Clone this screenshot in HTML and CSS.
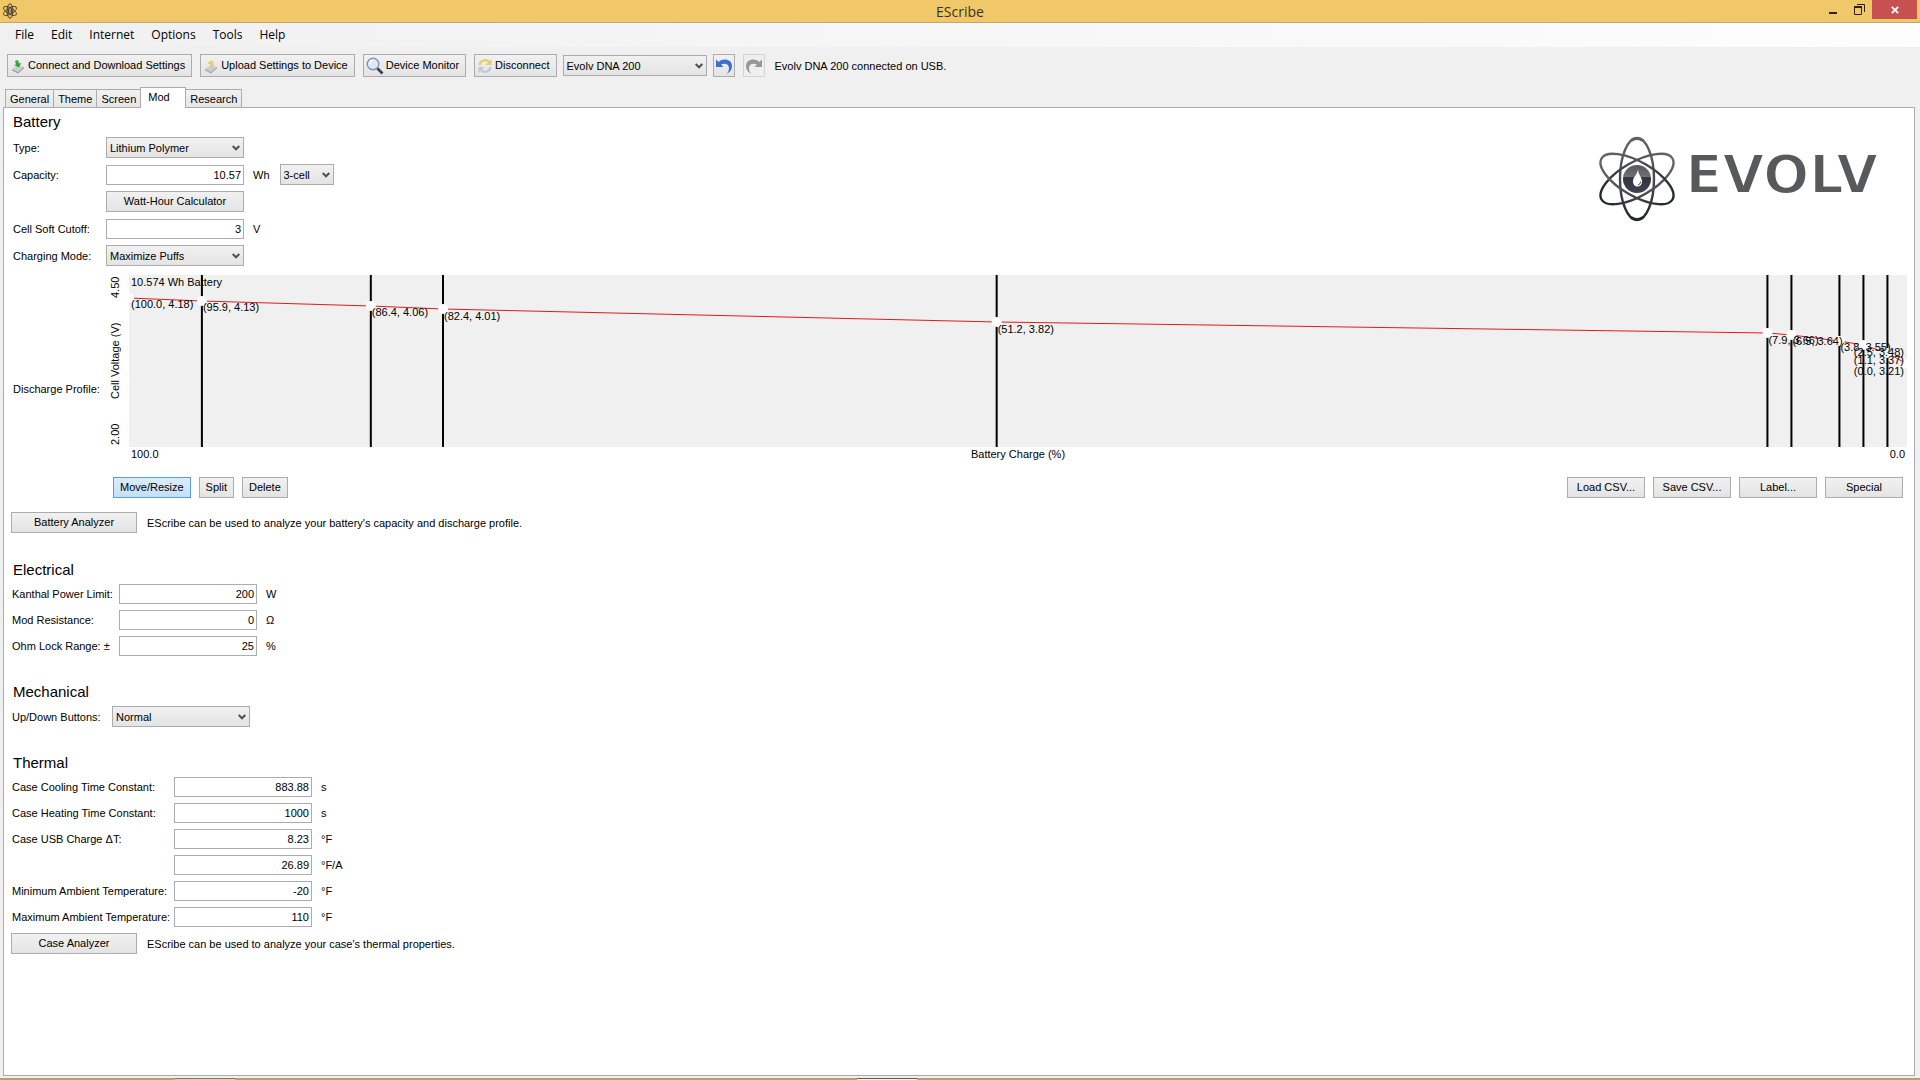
FILE: index.html
```html
<!DOCTYPE html>
<html lang="en">
<head>
<meta charset="utf-8">
<title>EScribe</title>
<link rel="stylesheet" href="styles.css">
</head>
<body>
<svg width="0" height="0" class="defs" aria-hidden="true">
  <defs>
    <symbol id="chevron" viewBox="0 0 8 6"><path d="M.7 1 4 4.3 7.3 1" fill="none" stroke="#505050" stroke-width="2"/></symbol>
    <linearGradient id="atomInk" gradientUnits="userSpaceOnUse" x1="0" y1="0" x2="0" y2="86"><stop offset="0" stop-color="#666"/><stop offset=".5" stop-color="#4a4b4f"/><stop offset="1" stop-color="#22242e"/></linearGradient>
    <linearGradient id="coreInk" x1="0" y1="0" x2="0" y2="1"><stop offset="0" stop-color="#55575d"/><stop offset=".42" stop-color="#6d7075"/><stop offset=".45" stop-color="#30343d"/><stop offset="1" stop-color="#3f434d"/></linearGradient>
  </defs>
</svg>

<header class="titlebar">
  <svg class="app-icon" width="16" height="16" viewBox="0 0 16 16"><g fill="none" stroke="#4a3f25"><ellipse cx="8" cy="8" rx="3" ry="7.2"/><ellipse cx="8" cy="8" rx="3" ry="7.2" transform="rotate(60 8 8)"/><ellipse cx="8" cy="8" rx="3" ry="7.2" transform="rotate(-60 8 8)"/></g><circle cx="8" cy="8" r="2.6" fill="#4b4a4c"/><path d="M8 6v4" stroke="#ddd"/></svg>
  <h1 class="app-title">EScribe</h1>
  <div class="window-buttons">
    <button class="win-btn" aria-label="Minimize"><svg width="10" height="14" viewBox="0 0 10 14"><path d="M1 9h8v2H1z" fill="#2b2310"/></svg></button>
    <button class="win-btn" aria-label="Restore"><svg width="11" height="11" viewBox="0 0 11 11"><path d="M3 .5h7.5V8" fill="none" stroke="#2b2310"/><path d="M.5 3v7.5h7V3z" fill="none" stroke="#2b2310"/><path d="M0 2h8v2H0z" fill="#2b2310"/></svg></button>
    <button class="win-btn close" aria-label="Close"><svg width="8" height="8" viewBox="0 0 8 8"><path d="m.8.8 6.4 6.4M7.2.8.8 7.2" stroke="#fff" stroke-width="1.8"/></svg></button>
  </div>
</header>

<nav class="menubar">
  <button>File</button><button>Edit</button><button>Internet</button><button>Options</button><button>Tools</button><button>Help</button>
</nav>

<div class="toolbar">
  <button class="btn tool">
    <svg width="16" height="16" viewBox="0 0 16 16"><path d="m2 11 6-4 6 2-6 5z" fill="#c9cdd2"/><path d="m2 11 6 3 6-5v1.5l-6 5-6-3z" fill="#9a9ea3"/><path d="m5 3 3-1 1 3.5 2-.5-2 4.5L4 7l2-.5z" fill="#2fa83a"/></svg>
    Connect and Download Settings</button>
  <button class="btn tool">
    <svg width="16" height="16" viewBox="0 0 16 16"><path d="m2 11 6-4 6 2-6 5z" fill="#c9cdd2"/><path d="m2 11 6 3 6-5v1.5l-6 5-6-3z" fill="#a5a9ae"/><path d="m4.5 6 2.5-3.5 5 1.5-2 1 1.5 3L8 9 7 6z" fill="#eccb72"/></svg>
    Upload Settings to Device</button>
  <button class="btn tool">
    <svg width="18" height="18" viewBox="0 0 18 18"><path d="m11 11 5.5 5.5" stroke="#3d3f52" stroke-width="2.6"/><circle cx="7" cy="7" r="5.8" fill="#dcebfb" stroke="#8793a8" stroke-width="1.4"/><path d="M3.5 7A3.5 3.5 0 0 1 7 3.5" stroke="#fff" stroke-width="1.5" fill="none"/></svg>
    Device Monitor</button>
  <button class="btn tool">
    <svg width="16" height="16" viewBox="0 0 16 16"><path d="M2.5 7A5.5 5.5 0 0 1 12 4" fill="none" stroke="#ecc766" stroke-width="2.2"/><path d="M14.5 1v6h-6z" fill="#ecc766"/><path d="M13.5 9A5.5 5.5 0 0 1 4 12" fill="none" stroke="#bfcad6" stroke-width="2.2"/><path d="M1.5 15V9h6z" fill="#bfcad6"/></svg>
    Disconnect</button>
  <span class="combo device"><select aria-label="Device"><option>Evolv DNA 200</option></select><svg class="chev" width="8" height="6"><use href="#chevron"/></svg></span>
  <button class="btn icon-btn" aria-label="Undo"><svg width="18" height="18" viewBox="0 0 18 18"><path d="M1 2.5V10h7.5L6 7.6c3.5-2 8-.6 8 3.4 0 2.5-1 4.5-2.5 6 3.5-1.6 5.5-4.5 5.5-8C17 2.5 8.5.5 3.7 5z" fill="#3f6fce"/></svg></button>
  <button class="btn icon-btn" disabled aria-label="Redo"><svg width="18" height="18" viewBox="0 0 18 18"><path d="M17 2.5V10H9.5L12 7.6c-3.5-2-8-.6-8 3.4 0 2.5 1 4.5 2.5 6C3 15.4 1 12.5 1 9c0-6.5 8.5-8.5 13.3-4z" fill="#979797"/></svg></button>
  <output class="status">Evolv DNA 200 connected on USB.</output>
</div>

<div class="tabs" role="tablist">
  <button role="tab">General</button><button role="tab">Theme</button><button role="tab">Screen</button><button role="tab" aria-selected="true" class="active">Mod</button><button role="tab">Research</button>
</div>

<main class="panel">
  <section class="battery">
    <div class="battery-form">
      <h2>Battery</h2>
      <div class="row"><label for="type">Type:</label><span class="combo field"><select id="type"><option>Lithium Polymer</option></select><svg class="chev" width="8" height="6"><use href="#chevron"/></svg></span></div>
      <div class="row"><label for="cap">Capacity:</label><input class="field" id="cap" value="10.57"><span class="unit">Wh</span><span class="combo cells"><select aria-label="Cells"><option>3-cell</option></select><svg class="chev" width="8" height="6"><use href="#chevron"/></svg></span></div>
      <div class="row"><span></span><button class="btn calc">Watt-Hour Calculator</button></div>
      <div class="row"><label for="cut">Cell Soft Cutoff:</label><input class="field" id="cut" value="3"><span class="unit">V</span></div>
      <div class="row"><label for="mode">Charging Mode:</label><span class="combo field"><select id="mode"><option>Maximize Puffs</option></select><svg class="chev" width="8" height="6"><use href="#chevron"/></svg></span></div>
    </div>
    <div class="logo">
      <svg width="78" height="86" viewBox="0 0 78 86">
        <g fill="none" stroke="url(#atomInk)">
          <ellipse cx="39" cy="43" rx="17" ry="41" stroke-width="2.4"/>
          <ellipse cx="39" cy="43" rx="17" ry="41" stroke-width="2.4" transform="rotate(60 39 43)"/>
          <ellipse cx="39" cy="43" rx="17" ry="41" stroke-width="2.4" transform="rotate(-60 39 43)"/>
        </g>
        <g fill="none" stroke-width="3" stroke-linecap="round">
          <path d="M34 4q5-3 10 0" stroke="#606163"/>
          <path d="M34 82q5 3 10 0" stroke="#262831"/>
        </g>
        <circle cx="39" cy="43" r="14" fill="url(#coreInk)"/>
        <path d="M40 33c0 6 4 8 4 12.5 0 3-2 5-4.5 5S35 48.5 35 45.5c0-5 4.5-6.5 5-12.5z" fill="#fff"/><path d="M42.5 45.5c0 2-1 3-2.5 3.5" fill="none" stroke="#40444e"/>
      </svg>
      <span class="wordmark">EVOLV</span>
    </div>
  </section>

  <section class="discharge">
    <div class="profile-label">Discharge Profile:</div>
    <div class="y-axis"><span>4.50</span><span>Cell Voltage (V)</span><span>2.00</span></div>
    <svg class="plot" role="img" aria-label="Discharge profile">
      <g stroke="#000" stroke-width="2">
        <line x1="4.1%" x2="4.1%" y2="100%"/><line x1="13.6%" x2="13.6%" y2="100%"/><line x1="17.66%" x2="17.66%" y2="100%"/><line x1="48.8%" x2="48.8%" y2="100%"/><line x1="92.15%" x2="92.15%" y2="100%"/><line x1="93.5%" x2="93.5%" y2="100%"/><line x1="96.2%" x2="96.2%" y2="100%"/><line x1="97.55%" x2="97.55%" y2="100%"/><line x1="98.9%" x2="98.9%" y2="100%"/>
      </g>
      <g stroke="#e01b1b">
        <line x1="0%" y1="23" x2="4.1%" y2="26"/><line x1="4.1%" y1="26" x2="13.6%" y2="31"/><line x1="13.6%" y1="31" x2="17.66%" y2="34"/><line x1="17.66%" y1="34" x2="48.8%" y2="47"/><line x1="48.8%" y1="47" x2="92.15%" y2="58"/><line x1="92.15%" y1="58" x2="93.5%" y2="60"/><line x1="93.5%" y1="60" x2="96.2%" y2="66"/><line x1="96.2%" y1="66" x2="97.55%" y2="70"/><line x1="97.55%" y1="70" x2="98.9%" y2="78"/><line x1="98.9%" y1="78" x2="100%" y2="89"/>
      </g>
      <g fill="#fff">
        <circle cx="0%" cy="23" r="5"/><circle cx="4.1%" cy="26" r="5"/><circle cx="13.6%" cy="31" r="5"/><circle cx="17.66%" cy="34" r="5"/><circle cx="48.8%" cy="47" r="5"/><circle cx="92.15%" cy="58" r="5"/><circle cx="93.5%" cy="60" r="5"/><circle cx="96.2%" cy="66" r="5"/><circle cx="97.55%" cy="70" r="5"/><circle cx="98.9%" cy="78" r="5"/><circle cx="100%" cy="89" r="5"/>
      </g>
      <g class="plot-text">
        <text x="0%" dx="2" y="11">10.574 Wh Battery</text>
        <text x="0%" dx="2" y="33">(100.0, 4.18)</text>
        <text x="4.1%" dx="1" y="36">(95.9, 4.13)</text>
        <text x="13.6%" dx="1" y="41">(86.4, 4.06)</text>
        <text x="17.66%" dx="1" y="45">(82.4, 4.01)</text>
        <text x="48.8%" dx="1" y="58">(51.2, 3.82)</text>
        <text x="92.15%" dx="1" y="69">(7.9, 3.66)</text>
        <text x="93.5%" dx="1" y="70">(6.5, 3.64)</text>
        <text x="96.2%" dx="1" y="76">(3.8, 3.55)</text>
        <g text-anchor="end"><text x="100%" dx="-3" y="81">(2.5, 3.48)</text><text x="100%" dx="-3" y="89">(1.1, 3.37)</text><text x="100%" dx="-3" y="100">(0.0, 3.21)</text></g>
      </g>
    </svg>
    <div class="x-axis"><span>100.0</span><span>Battery Charge (%)</span><span>0.0</span></div>
    <div class="plot-actions">
      <button class="btn pressed" aria-pressed="true">Move/Resize</button><button class="btn">Split</button><button class="btn">Delete</button>
      <span class="spacer"></span>
      <button class="btn file">Load CSV...</button><button class="btn file">Save CSV...</button><button class="btn file">Label...</button><button class="btn file">Special</button>
    </div>
  </section>
  <div class="analyzer after-plot"><button class="btn wide">Battery Analyzer</button><span>EScribe can be used to analyze your battery's capacity and discharge profile.</span></div>

  <section class="electrical">
    <h2>Electrical</h2>
    <div class="row"><label for="kpl">Kanthal Power Limit:</label><input class="field" id="kpl" value="200"><span class="unit">W</span></div>
    <div class="row"><label for="res">Mod Resistance:</label><input class="field" id="res" value="0"><span class="unit">Ω</span></div>
    <div class="row"><label for="olr">Ohm Lock Range: ±</label><input class="field" id="olr" value="25"><span class="unit">%</span></div>
  </section>

  <section class="mechanical">
    <h2>Mechanical</h2>
    <div class="row"><label for="ud">Up/Down Buttons:</label><span class="combo field"><select id="ud"><option>Normal</option></select><svg class="chev" width="8" height="6"><use href="#chevron"/></svg></span></div>
  </section>

  <section class="thermal">
    <h2>Thermal</h2>
    <div class="row"><label for="cool">Case Cooling Time Constant:</label><input class="field" id="cool" value="883.88"><span class="unit">s</span></div>
    <div class="row"><label for="heat">Case Heating Time Constant:</label><input class="field" id="heat" value="1000"><span class="unit">s</span></div>
    <div class="row"><label for="usb">Case USB Charge ΔT:</label><input class="field" id="usb" value="8.23"><span class="unit">°F</span></div>
    <div class="row"><span></span><input class="field" aria-label="Case USB charge per amp" value="26.89"><span class="unit">°F/A</span></div>
    <div class="row"><label for="min">Minimum Ambient Temperature:</label><input class="field" id="min" value="-20"><span class="unit">°F</span></div>
    <div class="row"><label for="max">Maximum Ambient Temperature:</label><input class="field" id="max" value="110"><span class="unit">°F</span></div>
  </section>
  <div class="analyzer"><button class="btn wide">Case Analyzer</button><span>EScribe can be used to analyze your case's thermal properties.</span></div>
</main>

<footer class="taskbar"><span class="task"></span><span class="task current"></span></footer>
</body>
</html>
```
FILE: styles.css
```css
* { box-sizing: border-box; }

body {
  margin: 0;
  min-height: 100vh;
  display: flex;
  flex-direction: column;
  background: #f0f0f0;
  color: #000;
  font: 11px/14px "Liberation Sans", Arial, sans-serif;
}

button, input, select { font: inherit; color: inherit; margin: 0; }
.defs { position: absolute; }

/* Title bar */
.titlebar {
  display: grid;
  grid-template-columns: 1fr auto 1fr;
  height: 23px;
  background: #f0c869;
  border-bottom: 1px solid #bfa878;
}
.app-icon { margin: 3px 0 0 2px; }
.app-title {
  margin: 0;
  font: 14px/23px "Open Sans", "Noto Sans", sans-serif;
  color: #3b311a;
}
.window-buttons { display: flex; justify-content: flex-end; padding-right: 3px; }
.win-btn {
  display: flex;
  align-items: center;
  justify-content: center;
  width: 26px;
  height: 19px;
  padding: 0;
  border: 0;
  background: none;
}
.win-btn.close { width: 45px; background: #c75050; }

/* Menu */
.menubar {
  display: flex;
  gap: 1px;
  height: 24px;
  padding-left: 7px;
  background: linear-gradient(to right, #f0f0f0, #fdfdfd);
}
.menubar button {
  padding: 0 8px;
  border: 0;
  background: none;
  font: 12px/24px "Open Sans", "Noto Sans", sans-serif;
}

/* Controls */
.btn {
  height: 21px;
  padding: 0 6px;
  border: 1px solid #acacac;
  background: linear-gradient(#f1f1f1, #e4e4e4);
  line-height: 19px;
}
.btn.pressed { border-color: #569de5; background: linear-gradient(#daecfc, #c4e0fc); }
.btn:disabled { border-color: #d4d4d4; background: #efefef; }
.combo { display: grid; align-items: center; }
.combo select {
  grid-area: 1 / 1;
  width: 100%;
  height: 21px;
  padding: 0 16px 0 3px;
  border: 1px solid #acacac;
  border-radius: 0;
  appearance: none;
  background: linear-gradient(#f1f1f1, #e4e4e4);
}
.chev { grid-area: 1 / 1; justify-self: end; margin-right: 4px; pointer-events: none; }
input.field {
  height: 20px;
  padding: 0 2px;
  border: 1px solid #abadb3;
  background: #fff;
  text-align: right;
}
.field { width: 138px; }

/* Toolbar */
.toolbar { display: flex; align-items: center; gap: 8px; padding: 7px; height: 37px; }
.tool, .icon-btn { display: flex; align-items: center; gap: 2px; height: 23px; padding: 0 6px 0 2px; }
.icon-btn { width: 22px; padding: 0; justify-content: center; }
.device { width: 144px; margin: 0 -2px; }
.status { margin-left: 2px; }

/* Tabs */
.tabs { display: flex; align-items: flex-end; height: 24px; padding-left: 5px; margin-bottom: -1px; z-index: 1; }
.tabs button {
  height: 19px;
  padding: 0 4px;
  border: 1px solid #acacac;
  margin-right: -1px;
  background: linear-gradient(#f1f1f1, #e6e6e6);
}
.tabs .active {
  width: 46px;
  height: 21px;
  padding: 0 7px 3px;
  border-bottom: 0;
  background: #fff;
  text-align: left;
}

/* Panel */
.panel {
  flex: 1;
  margin: 0 5px 2px 3px;
  padding: 2px 7px 0 0;
  border: 1px solid #acacac;
  background: #fff;
}
h2 {
  margin: 0;
  padding-left: 9px;
  font-size: 15px;
  font-weight: 400;
  line-height: 23px;
}
.row { display: flex; align-items: center; height: 26px; padding-left: 8px; }
.row > :first-child { flex: none; }
.unit { margin-left: 9px; }

.battery { display: flex; justify-content: space-between; align-items: flex-start; }
.battery h2 { margin-bottom: 1px; }
.battery .row { height: 27px; padding-left: 9px; }
.battery .row > :first-child { width: 93px; }
.cells { width: 54px; margin-left: 10px; }
.calc { width: 138px; }
.logo { display: flex; align-items: center; gap: 10px; margin: 26px 29px 0 0; color: #58595b; }
.wordmark {
  padding-bottom: 8px;
  font: bold 54px/60px "DejaVu Sans", sans-serif;
  -webkit-text-stroke: 2px #fff;
}

/* Discharge plot */
.discharge {
  display: grid;
  grid-template-columns: 97px 19px 1fr;
  grid-template-rows: 172px 14px auto;
  margin-top: 6px;
  padding-left: 9px;
}
.profile-label { grid-row: 1 / 4; align-self: center; padding-top: 4px; }
.y-axis {
  display: flex;
  flex-direction: row-reverse;
  justify-content: space-between;
  padding: 2px 0;
  line-height: 10px;
  writing-mode: vertical-rl;
  transform: rotate(180deg);
}
.plot { width: 100%; height: 172px; background: #f0f0f0; }
.x-axis {
  grid-column: 3;
  display: grid;
  grid-template-columns: 1fr auto 1fr;
  padding: 0 2px;
}
.x-axis :last-child { text-align: right; }
.plot-actions { grid-column: 2 / 4; display: flex; gap: 8px; margin: 16px 4px 0 3px; }
.plot-actions .file { width: 78px; }
.spacer { flex: 1; }

.analyzer { display: flex; align-items: center; gap: 10px; padding: 3px 0 3px 7px; }
.after-plot { margin-top: 11px; }
.wide { width: 126px; }

.electrical { padding-top: 22px; }
.mechanical, .thermal { padding-top: 21px; }
.electrical .row > :first-child { width: 107px; }
.mechanical .row { height: 27px; }
.mechanical .row > :first-child { width: 100px; }
.thermal .row > :first-child { width: 162px; }

/* Taskbar edge */
.taskbar { display: flex; gap: 622px; height: 2px; padding-left: 175px; background: #b9a268; }
.task { width: 60px; background: #e3d3a5; border-top: 1px solid #8a784a; }
.task.current { background: #fbf4de; border-color: #6b5c38; }
```
